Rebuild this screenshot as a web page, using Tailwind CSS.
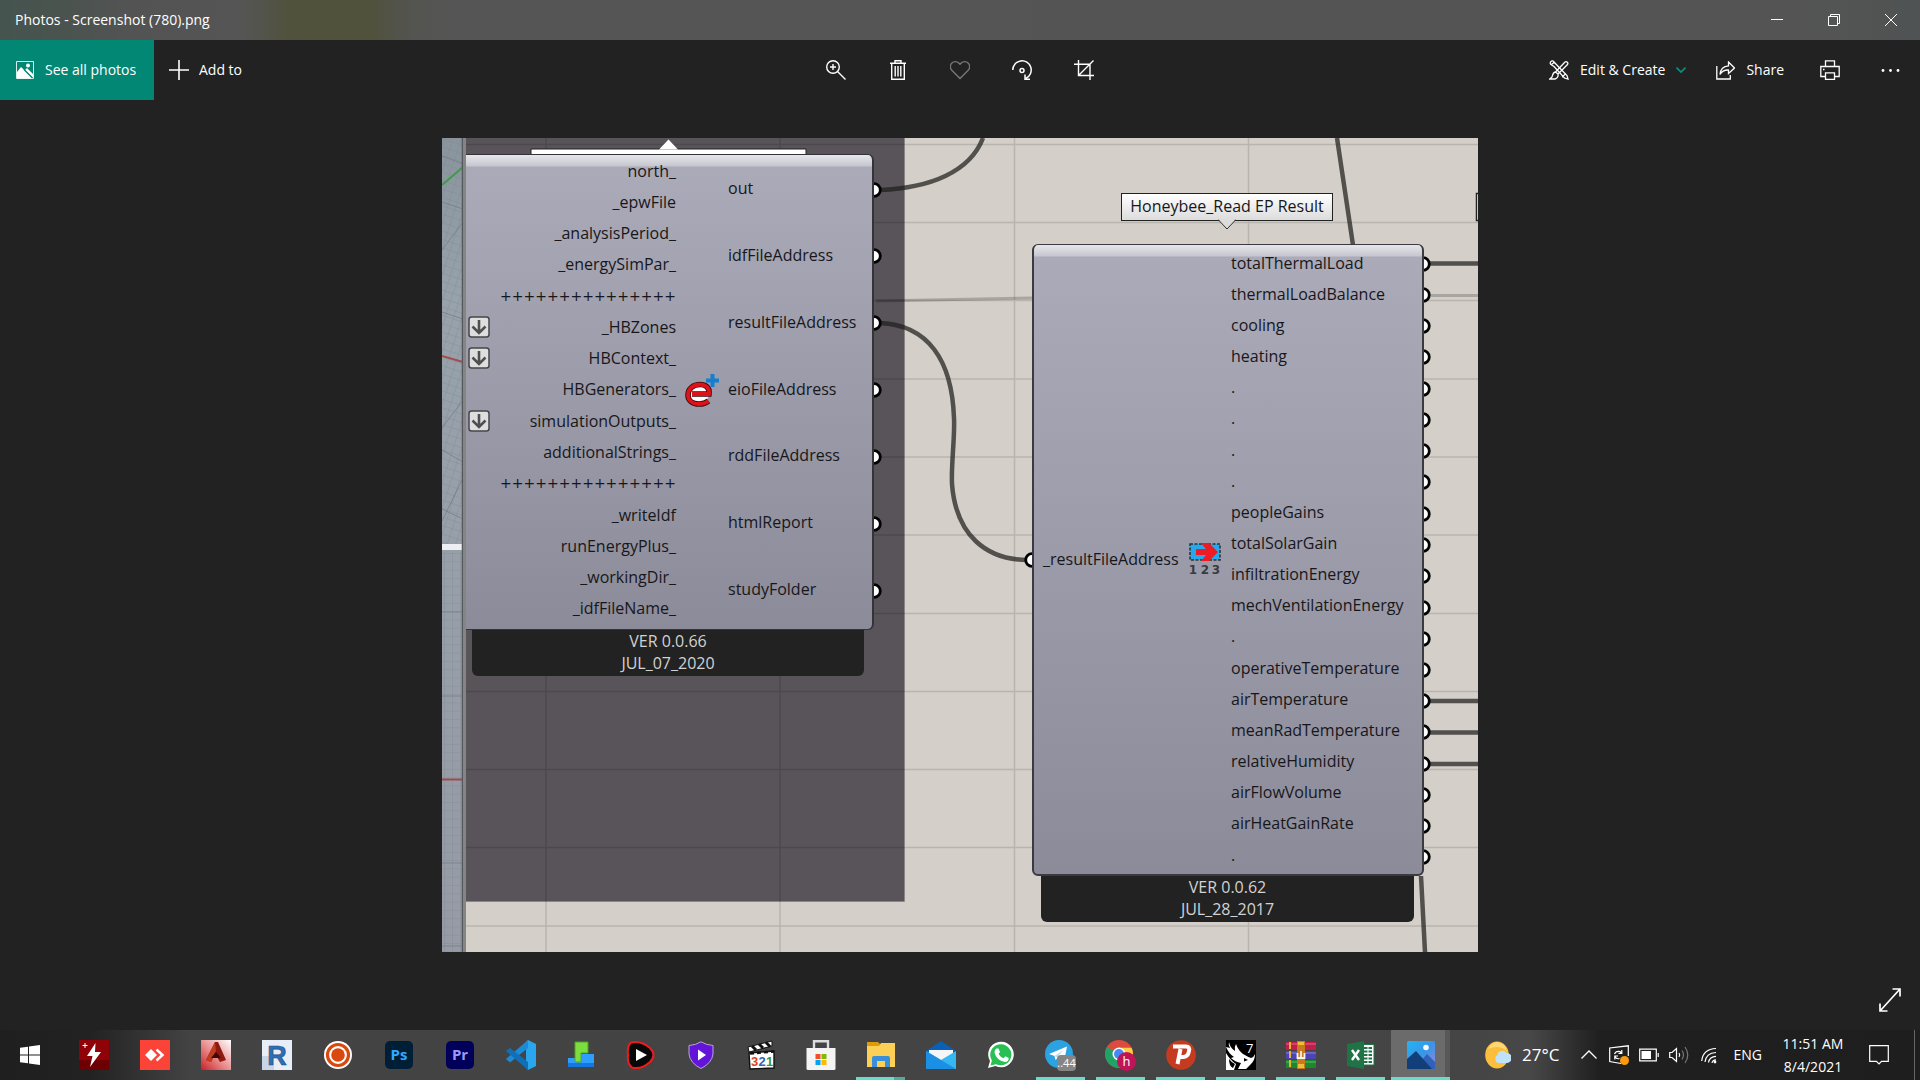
<!DOCTYPE html>
<html lang="en">
    <head>
        <meta charset="UTF-8" />
        <meta name="viewport" content="width=device-width, initial-scale=1.0" />
        <title>Photos - Screenshot (780).png</title>
        <script src="https://cdn.jsdelivr.net/npm/@tailwindcss/browser@4"></script>
    </head>
    <body class="flex h-screen flex-col overflow-hidden bg-[#222222] font-['Open_Sans',sans-serif] text-sm text-white">
        <!-- title bar -->
        <header class="flex h-10 shrink-0 items-center justify-between bg-[linear-gradient(90deg,#45544e_0px,#4a534f_60px,#535353_130px,#555555_240px,#50523d_290px,#50523c_370px,#545450_410px,#555555_450px,#545454_1800px,#505353_1920px)]">
            <h1 class="pl-[15px] text-sm">Photos - Screenshot (780).png</h1>
            <div class="flex h-full">
                <button aria-label="Minimize" class="flex w-[57px] items-center justify-center">
                    <svg class="size-3" viewBox="0 0 12 12" stroke="#fff"><path d="M0 5.5h12" /></svg>
                </button>
                <button aria-label="Restore" class="flex w-[57px] items-center justify-center">
                    <svg class="size-3" viewBox="0 0 12 12" fill="none" stroke="#fff"><path d="M.5 2.5h9v9h-9zM2.5 2.5v-2h9v9h-2" /></svg>
                </button>
                <button aria-label="Close" class="flex w-[58px] items-center justify-center">
                    <svg class="size-3" viewBox="0 0 12 12" stroke="#fff"><path d="M0 0l12 12M12 0L0 12" /></svg>
                </button>
            </div>
        </header>

        <!-- toolbar -->
        <nav class="grid h-[60px] shrink-0 grid-cols-[1fr_auto_1fr]">
            <div class="flex">
                <button class="flex w-[154px] items-center gap-[11px] bg-[#038775] pl-4">
                    <svg class="size-[18px]" viewBox="0 0 18 18">
                        <path d="M.5.5h17v17H.5z" fill="none" stroke="#d7eeea" />
                        <path d="M1 11l4-5 12 11.500H1z" fill="#fff" />
                        <path d="M9 9l2-2 6 6v4z" fill="#fff" />
                        <path d="M8 8.500l8.500 8.500" stroke="#038775" stroke-width="1.200" />
                        <circle cx="12" cy="4.500" r="2" fill="#fff" />
                    </svg>
                    See all photos
                </button>
                <button class="flex items-center gap-[10px] pl-[15px]">
                    <svg class="size-5" viewBox="0 0 20 20" stroke="#fff" stroke-width="1.600"><path d="M10 0v20M0 10h20" /></svg>
                    Add to
                </button>
            </div>
            <div class="flex">
                <button aria-label="Zoom" class="flex w-[62px] items-center justify-center">
                    <svg class="size-5" viewBox="0 0 20 20" fill="none" stroke="#fff" stroke-width="1.400"><circle cx="7" cy="7" r="6.300" /><path d="M11.500 11.500l8 8M7 4v6M4 7h6" /></svg>
                </button>
                <button aria-label="Delete" class="flex w-[62px] items-center justify-center">
                    <svg class="size-5" viewBox="0 0 20 20" fill="none" stroke="#fff" stroke-width="1.400"><path d="M2 3.200h16M7 3V.8h6V3M3.700 3.500V19.300h12.600V3.500M7.200 6v10.500M10 6v10.500M12.800 6v10.500" /></svg>
                </button>
                <button aria-label="Add to favorites" class="flex w-[62px] items-center justify-center">
                    <svg class="size-5" viewBox="0 0 20 20" fill="none" stroke="#777" stroke-width="1.400"><path d="M10 18.500L1.800 10.200A4.900 4.900 0 0 1 1.900 3.100A4.800 4.800 0 0 1 8.800 3.100L10 4.300L11.200 3.100A4.800 4.800 0 0 1 18.100 3.100A4.900 4.900 0 0 1 18.200 10.200Z" /></svg>
                </button>
                <button aria-label="Rotate" class="flex w-[62px] items-center justify-center">
                    <svg class="size-5" viewBox="0 0 20 20" fill="none" stroke="#fff" stroke-width="1.500"><path d="M.8 10A9.200 9.200 0 1 1 14 18.300M13 14.500v4.700h5" /><circle cx="10" cy="10.500" r="2" /></svg>
                </button>
                <button aria-label="Crop" class="flex w-[62px] items-center justify-center">
                    <svg class="size-5" viewBox="0 0 20 20" fill="none" stroke="#fff" stroke-width="1.400"><path d="M4.500 0v15.500H20M0 4.200h16V20M4.500 15.500L19.500.5" /></svg>
                </button>
            </div>
            <div class="flex justify-end">
                <button class="flex items-center gap-[11px]">
                    <svg class="size-5" viewBox="0 0 20 20" fill="none" stroke="#fff" stroke-width="1.300">
                        <path d="M5 6.500L2 4.500A2 2 0 1 1 5 2L18 15.500L19 19L15.500 18ZM13 17l4-3.500M2 5l3.500-3" />
                        <path d="M6.500 12L16 2A1.800 1.800 0 0 1 18.500 4.500L9 14M6.500 12C4 12 4 14 3 17L.8 19H6C8.500 18.500 9.500 16 9 14Z" />
                    </svg>
                    <span>Edit &amp; Create</span>
                    <svg class="size-[10px]" viewBox="0 0 10 10" fill="none" stroke="#0a8f7d" stroke-width="1.700"><path d="M.5 2.500l4.500 4.500L9.500 2.500" /></svg>
                </button>
                <button class="ml-[30px] flex items-center gap-[11px]">
                    <svg class="size-[19px]" viewBox="0 0 19 19" fill="none" stroke="#fff" stroke-width="1.300"><path d="M.8 5v13h13.500v-4M4 13.500C4.500 8 8 5 12.500 4.800V1l6 6-6 5.500V9C9 8.800 6 10 4 13.500z" /></svg>
                    Share
                </button>
                <button aria-label="Print" class="ml-[36px] flex w-5 items-center">
                    <svg class="size-5" viewBox="0 0 20 20" fill="none" stroke="#fff" stroke-width="1.300"><path d="M5.500 6.500V.8h9v5.700M5 16.500H.8v-10h18.400v10H15M5.500 12.800h9v6.500h-9zM3 9.500h1.500" /></svg>
                </button>
                <button aria-label="See more" class="mr-5 ml-10 flex w-5 items-center justify-center">
                    <svg class="h-5 w-[19px]" viewBox="0 0 19 20" fill="#fff"><circle cx="2" cy="10.500" r="1.400" /><circle cx="9.500" cy="10.500" r="1.400" /><circle cx="17" cy="10.500" r="1.400" /></svg>
                </button>
            </div>
        </nav>

        <!-- viewer -->
        <main class="relative flex flex-1 items-start justify-center pt-[38px]">
            <div class="relative h-[814px] w-[1036px] overflow-hidden bg-[#d4cfc8] text-base leading-none text-[#17171a]">
                <svg class="absolute inset-0 size-full" viewBox="0 0 1036 814" fill="none">
                    <defs>
                        <linearGradient id="strip" x1="0" x2="0" y1="0" y2="1"><stop offset="0" stop-color="#89949d" /><stop offset=".2" stop-color="#98a2ab" /><stop offset="1" stop-color="#969ba5" /></linearGradient>
                        <pattern id="fine" width="8" height="8.300" patternUnits="userSpaceOnUse"><path d="M0 .5h8M2.500 0v8.300" stroke="#7f8790" stroke-opacity=".35" /></pattern>
                        <pattern id="fineSkew" width="8" height="8" patternUnits="userSpaceOnUse" patternTransform="rotate(18)"><path d="M0 .5h8M2.500 0v8" stroke="#7f8790" stroke-opacity=".35" /></pattern>
                        <circle id="port" r="6.300" fill="#fff" stroke="#000" stroke-width="2.800" />
                    </defs>
                    <!-- group -->
                    <path d="M24 0H462V763H24z" fill="#59535a" />
                    <path d="M24 763.500H462.500V0" stroke="#8b8686" />
                    <!-- canvas grid -->
                    <path d="M104 0V814M338 0V814M572.500 0V814M806.500 0V814M24 6.500H1036M24 84.500H1036M24 162.500H1036M24 241H1036M24 319H1036M24 397H1036M24 475.500H1036M24 553.500H1036M24 631.500H1036M24 709.500H1036M24 788H1036" stroke="#000" stroke-opacity=".13" stroke-width="1.500" />
                    <!-- viewport strip -->
                    <path d="M0 0H21V814H0z" fill="url(#strip)" />
                    <path d="M0 0H21V406H0z" fill="url(#fineSkew)" />
                    <path d="M0 414H21V814H0z" fill="url(#fine)" />
                    <path d="M0 112L21 84M0 290L21 262M0 383L21 340M0 18l21 8M0 64l21 7M0 174l21 7M0 312l21 12M0 371l21 10M0 474h21M0 558h21M0 725h21M0 808h21" stroke="#6d747c" stroke-opacity=".6" />
                    <path d="M0 47L21 29" stroke="#3f9a49" stroke-width="2" />
                    <path d="M0 218L21 224" stroke="#a34d52" stroke-width="2" />
                    <path d="M0 409H21" stroke="#eeeff4" stroke-width="6" />
                    <path d="M0 641.500H21" stroke="#9d4a4c" stroke-width="2" />
                    <path d="M20.500 0V814" stroke="#55585c" stroke-width="1.500" />
                    <path d="M22.500 0V814" stroke="#858585" stroke-width="3" />
                    <!-- wires -->
                    <path d="M434 163L590 160M989 157.500H1036" stroke="#000" stroke-opacity=".2" stroke-width="3" />
                    <g stroke="#1e1e1c" stroke-opacity=".72" stroke-width="4.500">
                        <path d="M438 52C488 50 528 34 541 0" />
                        <path d="M438 185C486 187 510 222 512 280C513 300 509 326 510 346C514 398 545 422 586 422" />
                        <path d="M895 0L911 107M979 738L983 814M988 125.500H1036M988 563H1036M988 594.500H1036M988 626H1036" />
                    </g>
                    <!-- grips -->
                    <use href="#port" x="432" y="52" /><use href="#port" x="432" y="118" /><use href="#port" x="432" y="185" /><use href="#port" x="432" y="252" /><use href="#port" x="432" y="319" /><use href="#port" x="432" y="386" /><use href="#port" x="432" y="453" />
                    <use href="#port" x="590" y="422" />
                    <use href="#port" x="981" y="126" /><use href="#port" x="981" y="157" /><use href="#port" x="981" y="188" /><use href="#port" x="981" y="219" /><use href="#port" x="981" y="251" /><use href="#port" x="981" y="282" /><use href="#port" x="981" y="313" /><use href="#port" x="981" y="344" /><use href="#port" x="981" y="376" /><use href="#port" x="981" y="407" /><use href="#port" x="981" y="438" /><use href="#port" x="981" y="470" /><use href="#port" x="981" y="501" /><use href="#port" x="981" y="532" /><use href="#port" x="981" y="563" /><use href="#port" x="981" y="594" /><use href="#port" x="981" y="626" /><use href="#port" x="981" y="657" /><use href="#port" x="981" y="688" /><use href="#port" x="981" y="719" />
                    <!-- callouts -->
                    <path d="M89 18V11H364V18" fill="#fff" stroke="#222" />
                    <path d="M217 11.500l9.500-10 9.500 10z" fill="#fff" />
                    <path d="M1040 55.500H1034.500V82.500H1040" fill="#fff" stroke="#222" stroke-width="1.500" />
                </svg>

                <div class="absolute top-[55px] left-[679px] flex h-[28px] w-[212px] items-center justify-center border border-[#222222] bg-linear-to-b from-white to-[#dcdcdc] pb-[2px]">
                    Honeybee_Read EP Result
                    <svg class="absolute top-full left-1/2 -mt-px h-[11px] w-[18px] -translate-x-1/2" viewBox="0 0 18 11"><path d="M0 0H18L9 10z" fill="#dcdcdc" /><path d="M0 .5L9 10L18 .5" fill="none" stroke="#333" /></svg>
                </div>

                <!-- simulation node -->
                <section class="absolute top-4 left-6 w-[408px]">
                    <div class="relative flex h-[476px] rounded-r-md border-y border-r-2 border-[#333338] bg-[linear-gradient(180deg,#e6e6eb_0px,#c6c6d0_11px,#abaab8_12px,#8c8b99_100%)] pb-[5px]">
                        <ul class="flex w-[210px] flex-col *:flex *:flex-1 *:items-center *:justify-end">
                            <li>north_</li>
                            <li>_epwFile</li>
                            <li>_analysisPeriod_</li>
                            <li>_energySimPar_</li>
                            <li class="font-['DejaVu_Sans',sans-serif] text-sm leading-none">+++++++++++++++</li>
                            <li>
                                <svg class="mr-auto ml-[2px] size-[22px]" viewBox="0 0 22 22" fill="none"><rect x="1" y="1" width="20" height="20" rx="2.500" fill="#dededf" stroke="#45454a" stroke-width="1.500" /><path d="M11 4v13M4.500 10.500L11 17l6.500-6.500" stroke="#4f4f52" stroke-width="2.600" /></svg>
                                _HBZones
                            </li>
                            <li>
                                <svg class="mr-auto ml-[2px] size-[22px]" viewBox="0 0 22 22" fill="none"><rect x="1" y="1" width="20" height="20" rx="2.500" fill="#dededf" stroke="#45454a" stroke-width="1.500" /><path d="M11 4v13M4.500 10.500L11 17l6.500-6.500" stroke="#4f4f52" stroke-width="2.600" /></svg>
                                HBContext_
                            </li>
                            <li>HBGenerators_</li>
                            <li>
                                <svg class="mr-auto ml-[2px] size-[22px]" viewBox="0 0 22 22" fill="none"><rect x="1" y="1" width="20" height="20" rx="2.500" fill="#dededf" stroke="#45454a" stroke-width="1.500" /><path d="M11 4v13M4.500 10.500L11 17l6.500-6.500" stroke="#4f4f52" stroke-width="2.600" /></svg>
                                simulationOutputs_
                            </li>
                            <li>additionalStrings_</li>
                            <li class="font-['DejaVu_Sans',sans-serif] text-sm leading-none">+++++++++++++++</li>
                            <li>_writeIdf</li>
                            <li>runEnergyPlus_</li>
                            <li>_workingDir_</li>
                            <li>_idfFileName_</li>
                        </ul>
                        <div class="flex w-[52px] items-center justify-center">
                            <svg class="h-[34px] w-9" viewBox="0 0 36 34" fill="none">
                                <ellipse cx="15" cy="21" rx="10" ry="9" fill="#fff" />
                                <path d="M8 21H25C26 14 21 11.500 16 11.500C9 11.500 4 16 4 22C4 28 9 31 15 31C19 31 22 30 24.500 28" stroke="#3a0a0c" stroke-width="5.600" />
                                <path d="M8 21H25C26 14 21 11.500 16 11.500C9 11.500 4 16 4 22C4 28 9 31 15 31C19 31 22 30 24.500 28" stroke="#e01219" stroke-width="3.800" />
                                <path d="M28.500 1v13M22 7.500h13" stroke="#147fd1" stroke-width="4" />
                            </svg>
                        </div>
                        <ul class="flex flex-1 flex-col pb-[2px] *:flex *:flex-1 *:items-center">
                            <li>out</li>
                            <li>idfFileAddress</li>
                            <li>resultFileAddress</li>
                            <li>eioFileAddress</li>
                            <li>rddFileAddress</li>
                            <li>htmlReport</li>
                            <li>studyFolder</li>
                        </ul>
                    </div>
                    <footer class="mr-[10px] ml-[6px] rounded-b-md bg-[#222222] pb-[2px] text-center leading-[22px] text-[#d2d2d2]">
                        <p>VER 0.0.66</p>
                        <p>JUL_07_2020</p>
                    </footer>
                </section>

                <!-- result reader node -->
                <section class="absolute top-[106px] left-[590px] w-[392px]">
                    <div class="flex h-[632px] rounded-md border-2 border-t border-[#3a3a40] bg-[linear-gradient(180deg,#e6e6eb_0px,#c6c6d0_11px,#abaab8_12px,#8c8b99_100%)] pt-[2px] pb-[4px]">
                        <div class="flex w-[197px] items-center justify-between pl-[9px]">
                            <span>_resultFileAddress</span>
                            <svg class="mr-[10px] h-[34px] w-8" viewBox="0 0 32 34">
                                <rect x="1" y="2" width="30" height="16" fill="#25a9ec" stroke="#333" stroke-width="1.600" stroke-dasharray="3 1.500" />
                                <path d="M7 7H17L12 1H20L29 10L20 19H12L17 13H7z" fill="#ed1c24" />
                                <g fill="#3a3a3e" font-family="DejaVu Sans" font-weight="bold" font-size="12" text-anchor="middle"><text x="4" y="32">1</text><text x="16" y="32">2</text><text x="27" y="32">3</text></g>
                            </svg>
                        </div>
                        <ul class="flex flex-1 flex-col *:flex *:flex-1 *:items-center">
                            <li>totalThermalLoad</li>
                            <li>thermalLoadBalance</li>
                            <li>cooling</li>
                            <li>heating</li>
                            <li>.</li>
                            <li>.</li>
                            <li>.</li>
                            <li>.</li>
                            <li>peopleGains</li>
                            <li>totalSolarGain</li>
                            <li>infiltrationEnergy</li>
                            <li>mechVentilationEnergy</li>
                            <li>.</li>
                            <li>operativeTemperature</li>
                            <li>airTemperature</li>
                            <li>meanRadTemperature</li>
                            <li>relativeHumidity</li>
                            <li>airFlowVolume</li>
                            <li>airHeatGainRate</li>
                            <li>.</li>
                        </ul>
                    </div>
                    <footer class="mr-[10px] ml-[9px] rounded-b-md bg-[#222222] pb-[2px] text-center leading-[22px] text-[#d2d2d2]">
                        <p>VER 0.0.62</p>
                        <p>JUL_28_2017</p>
                    </footer>
                </section>
            </div>
            <button aria-label="Full screen" class="absolute right-[19px] bottom-[18px]">
                <svg class="h-6 w-[22px]" viewBox="0 0 22 24" fill="none" stroke="#fff" stroke-width="1.700"><path d="M1 23L21 1M13.500 1H21V8.500M1 15.500V23H8.500" /></svg>
            </button>
        </main>

        <!-- taskbar -->
        <footer class="flex h-[50px] shrink-0 items-stretch justify-between bg-[linear-gradient(90deg,#1f1f1f_0px,#222222_90px,#434343_190px,#454545_1480px,#484848_1530px,#1f1f1f_1600px,#1e1e1e_100%)]">
            <div class="flex">
                <button aria-label="Start" class="flex w-[60px] items-center justify-center">
                    <svg class="size-5" viewBox="0 0 20 20" fill="#fff"><path d="M0 2.800L8 1.700V9.500H0zM9 1.500L20 0V9.500H9zM0 10.500H8V18.300L0 17.200zM9 10.500H20V20L9 18.500z" /></svg>
                </button>
                <div class="ml-[9px] flex gap-3 *:flex *:w-[49px] *:items-center *:justify-center">
                    <button aria-label="Flash tool">
                        <svg class="size-[30px]" viewBox="0 0 30 30"><path d="M0 0h30v30H0z" fill="#8f0207" /><path d="M0 20h30v10H0z" fill="#6e0004" /><path d="M16.500 3L8 16h5.500L11 27 22 12h-6z" fill="#fff" /><path d="M6 3v5M3.500 5.500h5" stroke="#fff" /></svg>
                    </button>
                    <button aria-label="AnyDesk">
                        <svg class="size-[30px]" viewBox="0 0 30 30"><path d="M0 0h30v30H0z" fill="#fb4337" /><path d="M11 9l6 6-6 6-6-6z" fill="#fff" /><path d="M16.500 9.500L22.500 15l-6 5.500" fill="none" stroke="#fff" stroke-width="2.500" /></svg>
                    </button>
                    <button aria-label="AutoCAD">
                        <svg class="size-[30px]" viewBox="0 0 30 30"><defs><linearGradient id="acad" x1="1" y1="0" x2="0" y2="1"><stop offset="0" stop-color="#fff" /><stop offset=".55" stop-color="#e88a8a" /><stop offset="1" stop-color="#c91f26" /></linearGradient></defs><path d="M0 0h30v30H0z" fill="url(#acad)" /><path d="M14 2h3l8 18-6 2-3-5-4 1-2 4-5-2z" fill="#8f1a12" /><path d="M14 2L5 20l5 2 5-11z" fill="#c23c22" /><path d="M10 18l5-6 5 6z" fill="#3b0b08" /></svg>
                    </button>
                    <button aria-label="Revit">
                        <svg class="size-[30px]" viewBox="0 0 30 30"><path d="M0 0h30v30H0z" fill="#e7eef8" /><path d="M0 16h12v14H0z" fill="#c8d5e8" /><text x="15" y="25" text-anchor="middle" font-family="Liberation Sans" font-weight="bold" font-size="27" fill="#2f6fb3" stroke="#1d4d86" stroke-width=".6">R</text></svg>
                    </button>
                    <button aria-label="Screen recorder">
                        <svg class="size-[30px]" viewBox="0 0 30 30"><circle cx="15" cy="15" r="14" fill="#fff" /><circle cx="15" cy="15" r="10.500" fill="none" stroke="#d9480f" stroke-width="3.200" /><circle cx="15" cy="15" r="6.800" fill="#d9480f" /></svg>
                    </button>
                    <button aria-label="Photoshop">
                        <svg class="size-7" viewBox="0 0 28 28"><rect width="28" height="28" rx="5" fill="#001e36" /><text x="14" y="19" text-anchor="middle" font-family="Open Sans" font-weight="bold" font-size="15" fill="#31a8ff">Ps</text></svg>
                    </button>
                    <button aria-label="Premiere Pro">
                        <svg class="size-7" viewBox="0 0 28 28"><rect width="28" height="28" rx="5" fill="#00005b" /><text x="14" y="19" text-anchor="middle" font-family="Open Sans" font-weight="bold" font-size="15" fill="#9999ff">Pr</text></svg>
                    </button>
                    <button aria-label="Visual Studio Code">
                        <svg class="size-[30px]" viewBox="0 0 30 30"><path d="M22 0L30 4V26L22 30L20 28V2z" fill="#2aa6ee" /><path d="M22 0V8L4 22.500L0 19z" fill="#1c8ad6" /><path d="M22 30V22L4 8L0 11z" fill="#0f70b7" /></svg>
                    </button>
                </div>
                <div class="ml-[11px] flex gap-[11px] *:relative *:flex *:w-[49px] *:items-center *:justify-center">
                    <button aria-label="Block builder">
                        <svg class="size-7" viewBox="0 0 28 28"><path d="M1 17H14V13H27V26H1z" fill="#2f9fff" /><path d="M1 22h26v4H1z" fill="#1478e0" /><path d="M8 1H21V12H14V21H8z" fill="#7ddc3f" stroke="#4da51e" /></svg>
                    </button>
                    <button aria-label="Video player">
                        <svg class="size-[30px]" viewBox="0 0 30 30"><path d="M5 2.500Q15 .5 24 8Q31 15 24 22Q15 30 6 27.500Q1 24 2 15Q1 6 5 2.500z" fill="#080808" stroke="#f01a1f" stroke-width="2" /><path d="M10 9l11 6-11 6z" fill="#fff" /></svg>
                    </button>
                    <button aria-label="Shield player">
                        <svg class="size-7" viewBox="0 0 28 28"><path d="M14 .8Q19 4 26 4.500V13Q25 22 14 27.500Q3 22 2 13V4.500Q9 4 14 .8z" fill="#6414d8" stroke="#b6a5da" /><path d="M11 8.500l8 5.500-8 5.500z" fill="#fff" /></svg>
                    </button>
                    <button aria-label="Media Player Classic">
                        <svg class="size-[30px]" viewBox="0 0 30 30"><path d="M2 7L26 1V6L3 12z" fill="#fff" stroke="#111" /><path d="M6 6l4 4M13 4l4 4M20 2.500l4 4" stroke="#111" stroke-width="3" /><path d="M3 13L28 11V28L4 29z" fill="#fff" stroke="#111" stroke-width="1.400" /><path d="M4 13.500L28 11.500" stroke="#111" stroke-width="2.500" stroke-dasharray="4 3" /><g font-family="Liberation Sans" font-weight="bold" font-size="13"><text x="5" y="26" fill="#d8431c">3</text><text x="12.500" y="26" fill="#2b62c4">2</text><text x="20" y="26" fill="#3b9438">1</text></g></svg>
                    </button>
                    <button aria-label="Microsoft Store">
                        <svg class="size-[30px]" viewBox="0 0 30 30"><path d="M8 9V1.200H22V9" fill="none" stroke="#ddd" stroke-width="2.400" /><path d="M.5 8h29v20.500q0 1.500-1.500 1.500H2Q.5 30 .5 28.500z" fill="#f4f4f4" /><path d="M9.500 14h5v5h-5z" fill="#f25022" /><path d="M15.500 14h5v5h-5z" fill="#7fba00" /><path d="M9.500 20h5v5h-5z" fill="#00a4ef" /><path d="M15.500 20h5v5h-5z" fill="#ffb900" /></svg>
                    </button>
                    <button aria-label="File Explorer">
                        <svg class="size-7" viewBox="0 0 28 28"><path d="M0 1H11l2 2v6H0z" fill="#e09b0b" /><path d="M0 5H12L14 2H28V26H0z" fill="#fccf55" /><path d="M5 26V17q0-2 2-2H21q2 0 2 2v9H18V20H10v6z" fill="#3a8fd8" /></svg>
                        <span class="absolute bottom-0 left-0 h-[3px] w-[38px] bg-[#68dccb]"></span><span class="absolute right-0 bottom-0 h-[3px] w-[11px] bg-[#56a79c]"></span>
                    </button>
                    <button aria-label="Mail">
                        <svg class="size-[30px]" viewBox="0 0 30 30"><path d="M0 11L15 1L30 11V16H0z" fill="#0b5fb4" /><path d="M3 10H27V22H3z" fill="#f4f6f8" /><path d="M0 11L15 20L30 11V29H0z" fill="#35b8f2" /><path d="M0 11L30 29H0z" fill="#1a8fe3" /></svg>
                    </button>
                    <button aria-label="WhatsApp">
                        <svg class="size-7" viewBox="0 0 28 28"><path d="M1 27l2-7A12.800 12.800 0 1 1 8.500 25z" fill="#fff" /><path d="M3.500 24.500l1.400-5A10.600 10.600 0 1 1 9 23.200z" fill="#28c053" /><path d="M9.500 7.500l2 0 1.500 3.500-1.400 2q1.600 3 5 4.200l1.800-2 3.300 1.700q0 4-4 4Q9.500 19.500 7.500 11.500q0-3 2-4z" fill="#fff" /></svg>
                    </button>
                    <button aria-label="Telegram">
                        <svg class="h-8 w-[31px]" viewBox="0 0 31 32"><circle cx="14" cy="15" r="14" fill="#2ca2e0" /><path d="M4 15L22 7.500L19 23L13 18.500L10.500 21L9.500 17z" fill="#fff" /><path d="M9.500 17L19 10.500L12 18.500" fill="#c4dcee" /><rect x="12" y="16" width="19" height="16" rx="4" fill="#858585" /><text x="21.500" y="28" text-anchor="middle" font-family="Open Sans" font-size="11" fill="#fff">..44</text></svg>
                        <span class="absolute inset-x-0 bottom-0 h-[3px] bg-[#68dccb]"></span>
                    </button>
                    <button aria-label="Google Chrome">
                        <svg class="h-8 w-[31px]" viewBox="0 0 31 32"><circle cx="14" cy="15" r="14" fill="#dd4b3e" /><path d="M14 15L1.900 8A14 14 0 0 0 14 29z" fill="#21a366" /><path d="M14 15V29A14 14 0 0 0 26.500 8.800H14z" fill="#ffcd42" /><circle cx="14" cy="15" r="6.500" fill="#fff" /><circle cx="14" cy="15" r="5" fill="#4688f4" /><circle cx="21.500" cy="22.500" r="9.500" fill="#bf1457" /><text x="21.500" y="27" text-anchor="middle" font-family="Open Sans" font-size="13" fill="#fff">h</text></svg>
                        <span class="absolute inset-x-0 bottom-0 h-[3px] bg-[#68dccb]"></span>
                    </button>
                    <button aria-label="Psiphon">
                        <svg class="size-[30px]" viewBox="0 0 30 30"><circle cx="15" cy="15" r="14.800" fill="#c53b20" /><path d="M7 6.500H20Q24 6.500 23 11Q22 17 17 17H13M14.500 9L11.500 24" fill="none" stroke="#fff" stroke-width="4" /></svg>
                        <span class="absolute inset-x-0 bottom-0 h-[3px] bg-[#68dccb]"></span>
                    </button>
                    <button aria-label="Rhino 7">
                        <svg class="size-[30px]" viewBox="0 0 30 30"><path d="M0 0h30v30H0z" fill="#000" /><path d="M3 2Q4 8 9 11Q8 7 10 4Q12 10 17 14Q22 17 25 18Q28 17 29 14Q29 20 25 24L20 29H12L15 23Q9 22 5 18L8 17Q3 14 0 7L4 8Q2 5 3 2z" fill="#fff" /><path d="M0 13Q4 20 10 24L8 30H0z" fill="#fff" /><path d="M3 19Q6 23 9 24L7 28Q3 26 3 19zM18 18l4 2-4 1.500z" fill="#000" /><text x="20" y="13" font-family="Open Sans" font-size="13" fill="#fff">7</text></svg>
                        <span class="absolute inset-x-0 bottom-0 h-[3px] bg-[#68dccb]"></span>
                    </button>
                    <button aria-label="WinRAR">
                        <svg class="size-[30px]" viewBox="0 0 30 30"><rect y="2" width="30" height="8" rx="1" fill="#c21e49" /><rect y="11" width="30" height="8" rx="1" fill="#4c43b5" /><rect y="20" width="30" height="8" rx="1" fill="#1b8a2b" /><path d="M0 4h30M0 13h30M0 22h30" stroke="#fff" stroke-opacity=".35" /><path d="M4 2v7M4 11v7M4 20v7" stroke="#e9b42a" stroke-width="2" /><path d="M11 1h8v28h-8z" fill="#c97a1c" /><path d="M12 2h6v3h-6zM12 24h6v4h-6z" fill="#f0bd3a" /><path d="M11.500 13v5h7v-5M15 11v6" stroke="#f3f3f3" stroke-width="1.800" fill="none" /></svg>
                        <span class="absolute inset-x-0 bottom-0 h-[3px] bg-[#68dccb]"></span>
                    </button>
                    <button aria-label="Excel">
                        <svg class="size-7" viewBox="0 0 28 28"><path d="M14 3.500H27V24H14z" fill="#fff" stroke="#1f7345" /><path d="M17 7h8M17 10.500h8M17 14h8M17 17.500h8M17 21h8" stroke="#1f7345" stroke-width="2" stroke-dasharray="3.500 1" /><path d="M0 3L17 0V28L0 25z" fill="#1f7345" /><path d="M5 9l7 10M12 9L5 19" stroke="#fff" stroke-width="2.400" /></svg>
                        <span class="absolute inset-x-0 bottom-0 h-[3px] bg-[#68dccb]"></span>
                    </button>
                    <button aria-label="Photos">
                        <span class="absolute inset-y-0 -left-[5px] w-[54px] bg-[#6b6b6b]"></span>
                        <span class="absolute inset-y-0 left-full w-[5px] bg-[#585858]"></span>
                        <svg class="relative size-7" viewBox="0 0 28 28"><defs><linearGradient id="sky" x1="0" x2="1" y1="0" y2="1"><stop offset="0" stop-color="#24b4f2" /><stop offset=".5" stop-color="#3796e8" /><stop offset="1" stop-color="#9a84d8" /></linearGradient></defs><rect width="28" height="28" rx="1.500" fill="url(#sky)" /><path d="M14 20L20 13L28 21V28H14z" fill="#2f62b8" /><path d="M0 18L9 10L25 28H0z" fill="#123f7a" /><circle cx="19" cy="6.500" r="2.800" fill="#f3f8fd" /></svg>
                        <span class="absolute -right-[5px] bottom-0 -left-[5px] h-[3px] bg-[#68dccb]"></span>
                    </button>
                </div>
            </div>

            <div class="flex items-center">
                <button class="mr-[14px] flex items-center gap-[11px] text-[17px]">
                    <svg class="h-7 w-[26px]" viewBox="0 0 26 28"><ellipse cx="12" cy="14" rx="11.800" ry="13.500" fill="#fbbf3d" /><path d="M3 8Q7 1 12 1Q20 2 22 10Q14 3 3 8z" fill="#ffd873" /><path d="M13 22A4.500 4.500 0 0 1 12.500 14A5 5 0 0 1 21.500 12A5 5 0 0 1 22 22z" fill="#bfe2fb" /></svg>
                    27°C
                </button>
                <div class="flex items-center *:flex *:w-[30px] *:justify-center">
                    <button aria-label="Show hidden icons"><svg class="h-5 w-4" viewBox="0 0 16 20" fill="none" stroke="#fff" stroke-width="1.300"><path d="M.5 13.500L8 6l7.500 7.500" /></svg></button>
                    <button aria-label="Windows Update"><svg class="size-5" viewBox="0 0 20 20" fill="none" stroke="#fff" stroke-width="1.200"><path d="M12 18.500L.7 16.500V3L19.300.8V11" /><path d="M5.500 9Q7 5.500 11 6.500L12.500 8M12.800 5v3.300H9.500M5.800 14.500V11H9M6 11.500Q7.500 14.500 10.500 13.500" /><circle cx="15.500" cy="15.500" r="4.500" fill="#fb9a0c" stroke="none" /></svg></button>
                    <button aria-label="Battery"><svg class="h-5 w-5" viewBox="0 0 20 20" fill="none" stroke="#fff" stroke-width="1.200"><path d="M.7 4.200H17.300V15.800H.7zM19.200 8v4" /><path d="M2.500 6H12V14H2.500z" fill="#fff" stroke="none" /></svg></button>
                    <button aria-label="Volume"><svg class="h-5 w-5" viewBox="0 0 20 20" fill="none" stroke="#fff" stroke-width="1.200"><path d="M.7 7.500H3L7.500 3.500V16.500L3 12.500H.7zM10 8Q11.500 10 10 12" /><path d="M13 5.500Q16 10 13 14.500M16 2Q21.500 10 16 18" stroke="#777" /></svg></button>
                    <button aria-label="Network"><svg class="h-5 w-4" viewBox="0 0 16 20" fill="none" stroke="#fff" stroke-width="1.200"><path d="M.7 16Q2 4 15 3.500M4 17Q5 8 15 7.500M7.500 17.500Q8.500 11.500 15 11.300M11 18Q11.500 15 15 14.800" /><circle cx="14" cy="17" r="1.400" fill="#fff" stroke="none" /></svg></button>
                </div>
                <button class="ml-[10px]">ENG</button>
                <button class="ml-4 w-[70px] text-center leading-[23px]">
                    <span class="block">11:51 AM</span>
                    <span class="block">8/4/2021</span>
                </button>
                <button aria-label="Notifications" class="ml-[21px]">
                    <svg class="h-5 w-5" viewBox="0 0 20 20" fill="none" stroke="#fff" stroke-width="1.200"><path d="M.7.700H19.300V16.300H12.500L10 18.800L7.500 16.300H.7z" /></svg>
                </button>
                <span class="ml-[25px] h-[50px] w-[6px] border-l border-[#666666]"></span>
            </div>
        </footer>
    </body>
</html>
